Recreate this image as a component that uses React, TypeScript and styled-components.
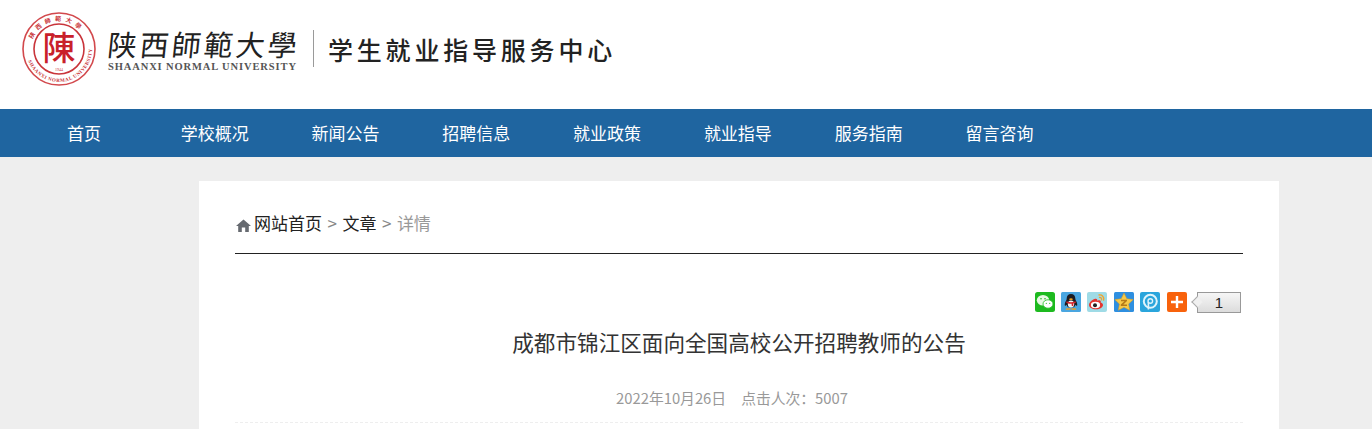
import styled, { createGlobalStyle } from 'styled-components';

const navItems = ['首页', '学校概况', '新闻公告', '招聘信息', '就业政策', '就业指导', '服务指南', '留言咨询'];

const GlobalStyle = createGlobalStyle`
  html, body {
    margin: 0;
    padding: 0;
    height: 429px;
    overflow: hidden;
    background: #eeeeee;
    font-family: "Noto Sans CJK SC", "Liberation Sans", sans-serif;
  }
  * { box-sizing: border-box; }
`;

const Seal = () => (
  <svg width="76" height="76" viewBox="0 0 76 76">
    <circle cx="38" cy="38" r="36" fill="#fff" stroke="#d2484c" strokeWidth="1.6" />
    <circle cx="38" cy="38" r="25" fill="#fff" stroke="#c9343a" strokeWidth="1.6" />
    <defs>
      <path id="sealTop" d="M10 38a28 28 0 0 1 56 0" />
      <path id="sealBottom" d="M5 38a33 33 0 0 0 66 0" />
    </defs>
    <text fontSize="6" fontWeight="700" fill="#c9343a" letterSpacing="4">
      <textPath href="#sealTop" startOffset="10">陕西師範大學</textPath>
    </text>
    <text fontSize="5" fontWeight="700" fill="#c9343a" fontFamily="Liberation Serif" letterSpacing="0.5">
      <textPath href="#sealBottom" startOffset="12">SHAANXI NORMAL UNIVERSITY</textPath>
    </text>
    <text x="38" y="49" textAnchor="middle" fontSize="33" fontWeight="500" fill="#c9202a">陳</text>
    <text x="38" y="60" textAnchor="middle" fontSize="4" fill="#c9343a" fontFamily="Liberation Serif">1944</text>
  </svg>
);

const HomeIcon = () => (
  <svg width="15" height="13" viewBox="0 0 15 13">
    <path d="M7.5 0.5 0 7h2.2v6h3.6V8.5h3.4V13h3.6V7H15z" fill="#666a70" />
  </svg>
);

const WechatIcon = () => (
  <svg width="20" height="20" viewBox="0 0 20 20">
    <rect width="20" height="20" rx="2.5" fill="#1dba1f" />
    <ellipse cx="8" cy="8.2" rx="6.2" ry="5.2" fill="#e8f8e4" />
    <ellipse cx="13" cy="12" rx="5" ry="4.2" fill="#fff" stroke="#1dba1f" strokeWidth="0.8" />
    <circle cx="6" cy="6.8" r="0.8" fill="#1dba1f" />
    <circle cx="10" cy="6.8" r="0.8" fill="#1dba1f" />
    <circle cx="11.3" cy="11.3" r="0.6" fill="#1dba1f" />
    <circle cx="14.7" cy="11.3" r="0.6" fill="#1dba1f" />
  </svg>
);

const QqIcon = () => (
  <svg width="20" height="20" viewBox="0 0 20 20">
    <rect width="20" height="20" rx="1.5" fill="#4aa6e0" />
    <path d="M10 2c-2.800 0-4.300 2-4.300 4.500 0 1-.4 1.800-1.100 3-.9 1.700-1.200 3.900-.5 4.300.4.200 1-.3 1.500-1 .3 1 .8 1.900 1.600 2.400h5.600c.8-.5 1.300-1.400 1.600-2.400.5.700 1.100 1.200 1.500 1 .7-.4.400-2.600-.5-4.300-.7-1.200-1.100-2-1.100-3C14.300 4 12.800 2 10 2z" fill="#1c1c22" />
    <ellipse cx="10" cy="12" rx="3.200" ry="3.600" fill="#f3f3f3" />
    <path d="M5.500 9.300c2.800 1.300 6.200 1.300 9 0l.3 1.500c-.8.500-1.700.7-2.500.8v2.300h-1.500l-.2-2.100c-1.700 0-3.600-.2-5.300-1.100z" fill="#d4232b" />
    <path d="M5.500 16.200h4v1.600H4.500zM10.500 16.200h4l1 1.600h-5z" fill="#f0a020" />
    <ellipse cx="10" cy="7.200" rx="1.800" ry="0.900" fill="#f0a020" />
  </svg>
);

const WeiboIcon = () => (
  <svg width="20" height="20" viewBox="0 0 20 20">
    <rect width="20" height="20" rx="2" fill="#9fdbe6" />
    <path d="M8.700 6.500c-3.200 1-6.700 3.800-6.700 6.500 0 2.400 3.200 4.300 7 4.300 4.200 0 7-2.200 7-4.300 0-1.500-1.500-2.100-2.400-2.400.7-1.700-.2-2.700-1.900-2.300l-1.500.5c.3-1.700-.7-2.500-2.400-1.800z" fill="#e5352f" />
    <ellipse cx="8.500" cy="13" rx="4.600" ry="3.300" fill="#fff" />
    <circle cx="8" cy="13.200" r="2" fill="#222" />
    <path d="M12 3c3-.5 5.500 2 4.600 5.200M12.500 5.500c1.400-.2 2.400.9 2.100 2.300" fill="none" stroke="#f2a32c" strokeWidth="1.300" strokeLinecap="round" />
  </svg>
);

const QzoneIcon = () => (
  <svg width="20" height="20" viewBox="0 0 20 20">
    <rect width="20" height="20" rx="1.5" fill="#2e8fe0" />
    <path d="M10 1l2.800 5.700 6.400.9-4.600 4.400 1.100 6.300L10 15.300l-5.700 3 1.100-6.300L.8 7.600l6.400-.9z" fill="#f7c948" stroke="#d99a20" strokeWidth="0.500" />
    <path d="M7 7.800h6v1.300l-3.700 3.400H13v1.400H6.800v-1.300l3.700-3.400H7z" fill="#b57a18" />
  </svg>
);

const TencentIcon = () => (
  <svg width="20" height="20" viewBox="0 0 20 20">
    <rect width="20" height="20" rx="2" fill="#2aa5dc" />
    <circle cx="10.300" cy="9.300" r="6.500" fill="none" stroke="#dff4fb" strokeWidth="2" />
    <circle cx="10.300" cy="9" r="2.300" fill="none" stroke="#dff4fb" strokeWidth="1.400" />
    <path d="M8.400 10v7.500" stroke="#dff4fb" strokeWidth="1.600" />
  </svg>
);

const MoreIcon = () => (
  <svg width="20" height="20" viewBox="0 0 20 20">
    <rect width="20" height="20" rx="2" fill="#f8620c" />
    <path d="M8.800 4h2.400v4.800H16v2.400h-4.800V16H8.800v-4.800H4V8.800h4.800z" fill="#fff" />
  </svg>
);

export default function App() {
  return (
    <>
      <GlobalStyle />
      <Header>
        <Seal />
        <LogoText>
          <LogoName>陕西師範大學</LogoName>
          <LogoEnglish>SHAANXI NORMAL UNIVERSITY</LogoEnglish>
        </LogoText>
        <Divider />
        <SiteName>学生就业指导服务中心</SiteName>
      </Header>
      <Nav>
        {navItems.map((item) => (
          <NavItem key={item}>{item}</NavItem>
        ))}
      </Nav>
      <Main>
        <Card>
          <Breadcrumb>
            <HomeIcon />
            <Crumb>网站首页</Crumb>
            <Sep>&gt;</Sep>
            <Crumb>文章</Crumb>
            <Sep>&gt;</Sep>
            <Crumb $muted>详情</Crumb>
          </Breadcrumb>
          <ShareBar>
            <ShareButton><WechatIcon /></ShareButton>
            <ShareButton><QqIcon /></ShareButton>
            <ShareButton><WeiboIcon /></ShareButton>
            <ShareButton><QzoneIcon /></ShareButton>
            <ShareButton><TencentIcon /></ShareButton>
            <ShareButton><MoreIcon /></ShareButton>
            <ShareCount>1</ShareCount>
          </ShareBar>
          <Title>成都市锦江区面向全国高校公开招聘教师的公告</Title>
          <Meta>
            <span>2022年10月26日</span>
            <span>点击人次：5007</span>
          </Meta>
        </Card>
      </Main>
    </>
  );
}

const Header = styled.header`
  display: flex;
  align-items: center;
  height: 109px;
  padding: 0 0 12px 21px;
  background: #fff;
`;

const LogoText = styled.div`
  display: flex;
  flex-direction: column;
  margin-left: 11px;
  width: 190px;
`;

const LogoName = styled.div`
  font-family: "Noto Sans CJK TC", "Noto Sans CJK SC", sans-serif;
  font-size: 29px;
  font-weight: 400;
  line-height: 36px;
  letter-spacing: 3px;
  color: #222;
  white-space: nowrap;
  transform: skewX(-6deg);
`;

const LogoEnglish = styled.div`
  font-family: "Liberation Serif", serif;
  font-weight: 700;
  font-size: 10.500px;
  line-height: 12px;
  letter-spacing: 0.880px;
  color: #555;
  white-space: nowrap;
`;

const Divider = styled.div`
  width: 1px;
  height: 37px;
  margin: 0 14px 0 15px;
  background: #9a9a9a;
`;

const SiteName = styled.div`
  font-size: 25px;
  font-weight: 500;
  letter-spacing: 3.800px;
  line-height: 36px;
  color: #222;
  white-space: nowrap;
`;

const Nav = styled.nav`
  display: flex;
  height: 48px;
  padding-left: 18.500px;
  background: #1f65a0;
`;

const NavItem = styled.a`
  width: 130.800px;
  line-height: 48px;
  text-align: center;
  font-size: 17px;
  color: #fff;
`;

const Main = styled.main`
  display: flex;
  height: 272px;
  padding: 24px 0 0 199px;
  background: #eeeeee;
`;

const Card = styled.section`
  width: 1080px;
  height: 260px;
  padding: 0 36px;
  background: #fff;
`;

const Breadcrumb = styled.div`
  display: flex;
  align-items: center;
  height: 73px;
  padding-top: 24px;
  padding-bottom: 13px;
  border-bottom: 1px solid #222;
  font-size: 17px;
  svg { margin: 6px 3px 0 1px; }
`;

const Crumb = styled.span<{ $muted?: boolean }>`
  color: ${({ $muted }) => ($muted ? '#999' : '#222')};
`;

const Sep = styled.span`
  margin: 0 5.500px;
  color: #888;
`;

const ShareBar = styled.div`
  display: flex;
  justify-content: flex-end;
  align-items: center;
  gap: 6.400px;
  height: 20px;
  margin-top: 38px;
  padding-right: 2px;
`;

const ShareButton = styled.a`
  display: block;
  width: 20px;
  height: 20px;
`;

const ShareCount = styled.span`
  position: relative;
  width: 44px;
  height: 21px;
  margin-left: 4px;
  border: 1px solid #999;
  background: linear-gradient(#f6f6f6, #dcdcdc);
  text-align: center;
  font-family: "Liberation Sans", sans-serif;
  font-size: 15px;
  line-height: 19px;
  color: #222;

  &::before {
    content: '';
    position: absolute;
    left: -5px;
    top: 5px;
    width: 7px;
    height: 7px;
    background: #f0f0f0;
    border-left: 1px solid #aaa;
    border-bottom: 1px solid #aaa;
    transform: rotate(45deg);
  }
`;

const Title = styled.h1`
  margin: 14px 0 0;
  text-align: center;
  font-size: 21.600px;
  font-weight: 400;
  line-height: 32px;
  color: #333;
`;

const Meta = styled.div`
  display: flex;
  justify-content: center;
  gap: 15px;
  height: 37px;
  margin-top: 28px;
  padding-right: 14px;
  border-bottom: 1px dashed #eeeeee;
  font-size: 14.800px;
  line-height: 24px;
  color: #999;
`;
